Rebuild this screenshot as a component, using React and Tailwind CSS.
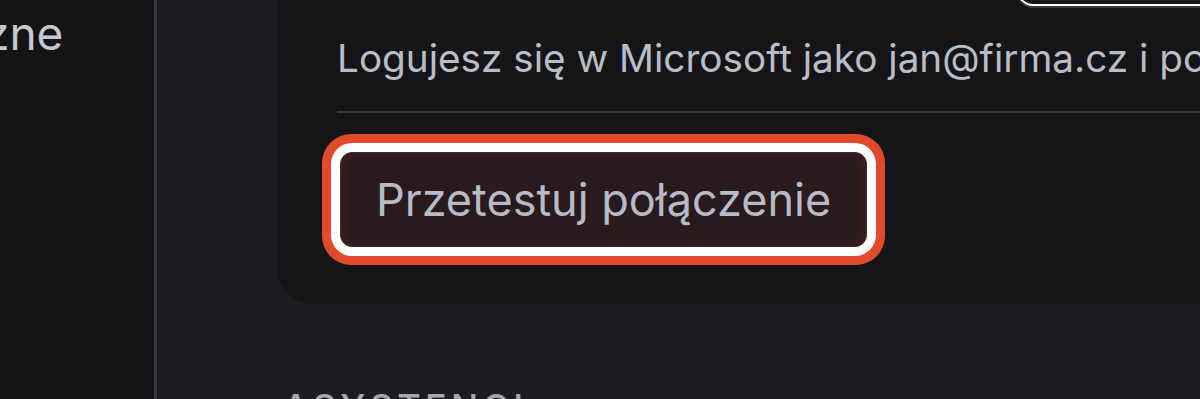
import React from 'react';

const App = () => {
  return (
    <div className="flex h-[399px] w-[1200px] overflow-hidden bg-[#1c1c21] font-['Inter','Noto_Sans',sans-serif]">
      {/* Sidebar */}
      <aside className="w-[157px] shrink-0 overflow-hidden bg-[#141417] border-r-[3px] border-[#38383d]">
        <div className="whitespace-nowrap text-[46px] leading-[54px] text-[#c4c8d0] mt-[6px] -ml-[16px]">
          zne
        </div>
      </aside>

      {/* Main */}
      <main className="flex-1 min-w-0 overflow-hidden pl-[120px]">
        {/* Connection card */}
        <section className="w-[1000px] -mt-[50px] bg-[#151518] rounded-b-[36px] px-[60px] pb-[57px]">
          <div className="flex justify-end">
            <div className="w-[200px] h-[56px] rounded-2xl border-2 border-white shadow-[0_1px_0_1px_#3a3a3e]" />
          </div>

          <p className="whitespace-nowrap text-[38.7px] leading-[46px] text-[#b9bdc6] mt-[29px]">
            Logujesz się w Microsoft jako jan@firma.cz i połączysz konto z asystentem.
          </p>

          <div className="border-t-2 border-[#36363b] mt-[30px]" />

          <button className="mt-[39px] ml-[3px] h-[95px] px-[35px] rounded-[12px] bg-[#281a1d] border border-[#43292d] text-[45px] leading-none text-[#b6bbc6] shadow-[inset_0_0_14px_rgba(130,45,45,0.35),0_0_0_9px_#ffffff,0_0_0_18px_#e14a2b]">
            Przetestuj połączenie
          </button>
        </section>

        <h2 className="mt-[83px] pl-[6px] text-[36px] leading-[40px] font-medium tracking-[0.12em] uppercase text-[#a3a7b0]">
          Asystenci
        </h2>
      </main>
    </div>
  );
};

export default App;
